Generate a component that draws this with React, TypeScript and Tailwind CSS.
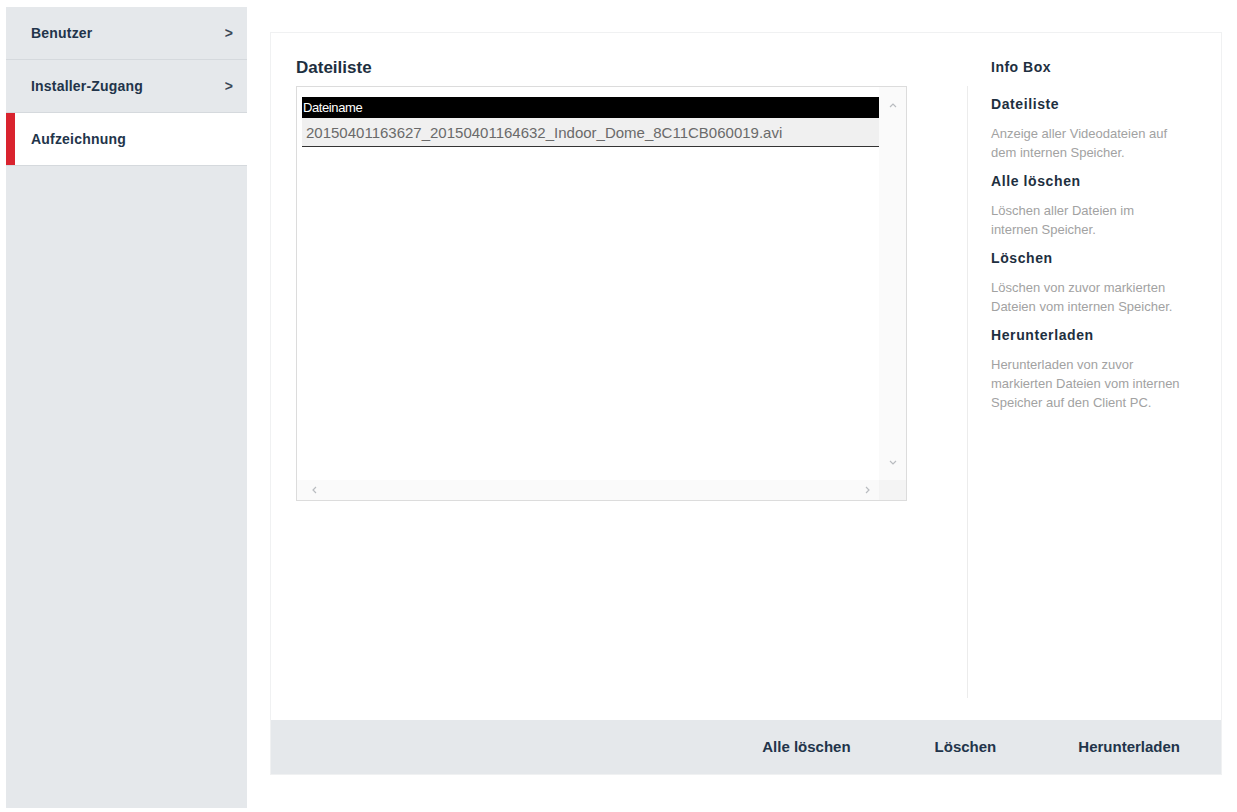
import React from 'react';

const navItems = [
    { label: 'Benutzer', arrow: true, active: false },
    { label: 'Installer-Zugang', arrow: true, active: false },
    { label: 'Aufzeichnung', arrow: false, active: true },
];

const infoSections = [
    { title: 'Dateiliste', text: ['Anzeige aller Videodateien auf', 'dem internen Speicher.'] },
    { title: 'Alle löschen', text: ['Löschen aller Dateien im', 'internen Speicher.'] },
    { title: 'Löschen', text: ['Löschen von zuvor markierten', 'Dateien vom internen Speicher.'] },
    { title: 'Herunterladen', text: ['Herunterladen von zuvor', 'markierten Dateien vom internen', 'Speicher auf den Client PC.'] },
];

const Chevron: React.FC<{ d: string }> = ({ d }) => (
    <svg width="10" height="10" viewBox="0 0 10 10" fill="none" stroke="#b9bcc0" strokeWidth={1.2}>
        <path d={d} />
    </svg>
);

const App: React.FC = () => {
    return (
        <div className="w-[1237px] h-[812px] bg-white flex items-start font-['Liberation_Sans',Arial,sans-serif]">
            {/* Sidebar */}
            <div className="ml-[6px] mt-[7px] w-[241px] h-[801px] bg-[#e5e8eb] flex flex-col">
                {navItems.map((item) => (
                    <div
                        key={item.label}
                        className={`relative h-[53px] flex items-center justify-between pl-[25px] pr-[14px] border-b border-[#d5d9dd] ${item.active ? 'bg-white' : ''}`}
                    >
                        {item.active && <div className="absolute left-0 top-0 bottom-0 w-[9px] bg-[#d9232e]" />}
                        <span className="text-[14px] font-bold tracking-[0.2px] text-[#22344a]">{item.label}</span>
                        {item.arrow && <span className="text-[14px] font-bold text-[#3a4756]">&gt;</span>}
                    </div>
                ))}
            </div>

            {/* Main panel */}
            <div className="ml-[23px] mt-[32px] w-[952px] h-[743px] flex flex-col border border-[#f0f1f2] bg-white">
                <div className="flex-1 flex pt-[24px]">
                    {/* Left column */}
                    <div className="pl-[25px] flex flex-col">
                        <div className="text-[17px] font-bold text-[#1e2f40] leading-[20px] h-[29px] pt-[1px]">Dateiliste</div>
                        <div className="w-[611px] h-[415px] border border-[#dcdcdc] flex flex-col">
                            <div className="flex-1 flex">
                                <div className="flex-1 pl-[5px] pt-[10px]">
                                    <div className="h-[21px] bg-black text-white text-[13px] leading-[21px] pl-[1px] tracking-[-0.4px]">Dateiname</div>
                                    <div className="h-[29px] bg-[#f0f0f0] border-b border-[#333] text-[15px] leading-[29px] pl-[4px] text-[#6a6a6a]">
                                        20150401163627_20150401164632_Indoor_Dome_8C11CB060019.avi
                                    </div>
                                </div>
                                <div className="w-[27px] bg-[#fafafa] flex flex-col items-center justify-between pt-[13px] pb-[12px]">
                                    <Chevron d="M2 7 L5 4 L8 7" />
                                    <Chevron d="M2 3 L5 6 L8 3" />
                                </div>
                            </div>
                            <div className="h-[20px] flex">
                                <div className="flex-1 bg-[#fafafa] flex items-center justify-between pl-[12px] pr-[6px]">
                                    <Chevron d="M7 2 L4 5 L7 8" />
                                    <Chevron d="M3 2 L6 5 L3 8" />
                                </div>
                                <div className="w-[27px] bg-[#f4f4f4]" />
                            </div>
                        </div>
                    </div>

                    {/* Info box */}
                    <div className="ml-[60px] flex flex-col">
                        <div className="pl-[24px] text-[14px] font-bold tracking-[0.5px] text-[#1e2f40] leading-[20px] h-[29px]">Info Box</div>
                        <div className="border-l border-[#ececec] pl-[23px] pt-[9px] h-[612px] w-[230px]">
                            {infoSections.map((s) => (
                                <div key={s.title} className="mb-[10px]">
                                    <div className="text-[14px] font-bold tracking-[0.6px] text-[#1e2f40] leading-[18px] h-[29px]">{s.title}</div>
                                    {s.text.map((t) => (
                                        <div key={t} className="text-[13px] text-[#a2a2a2] leading-[19px]">{t}</div>
                                    ))}
                                </div>
                            ))}
                        </div>
                    </div>
                </div>

                {/* Footer */}
                <div className="h-[54px] bg-[#e5e8eb] flex items-center justify-end pr-[41px] text-[15px] font-bold text-[#22344a]">
                    <span className="mr-[84px]">Alle löschen</span>
                    <span className="mr-[82px]">Löschen</span>
                    <span>Herunterladen</span>
                </div>
            </div>
        </div>
    );
};

export default App;
